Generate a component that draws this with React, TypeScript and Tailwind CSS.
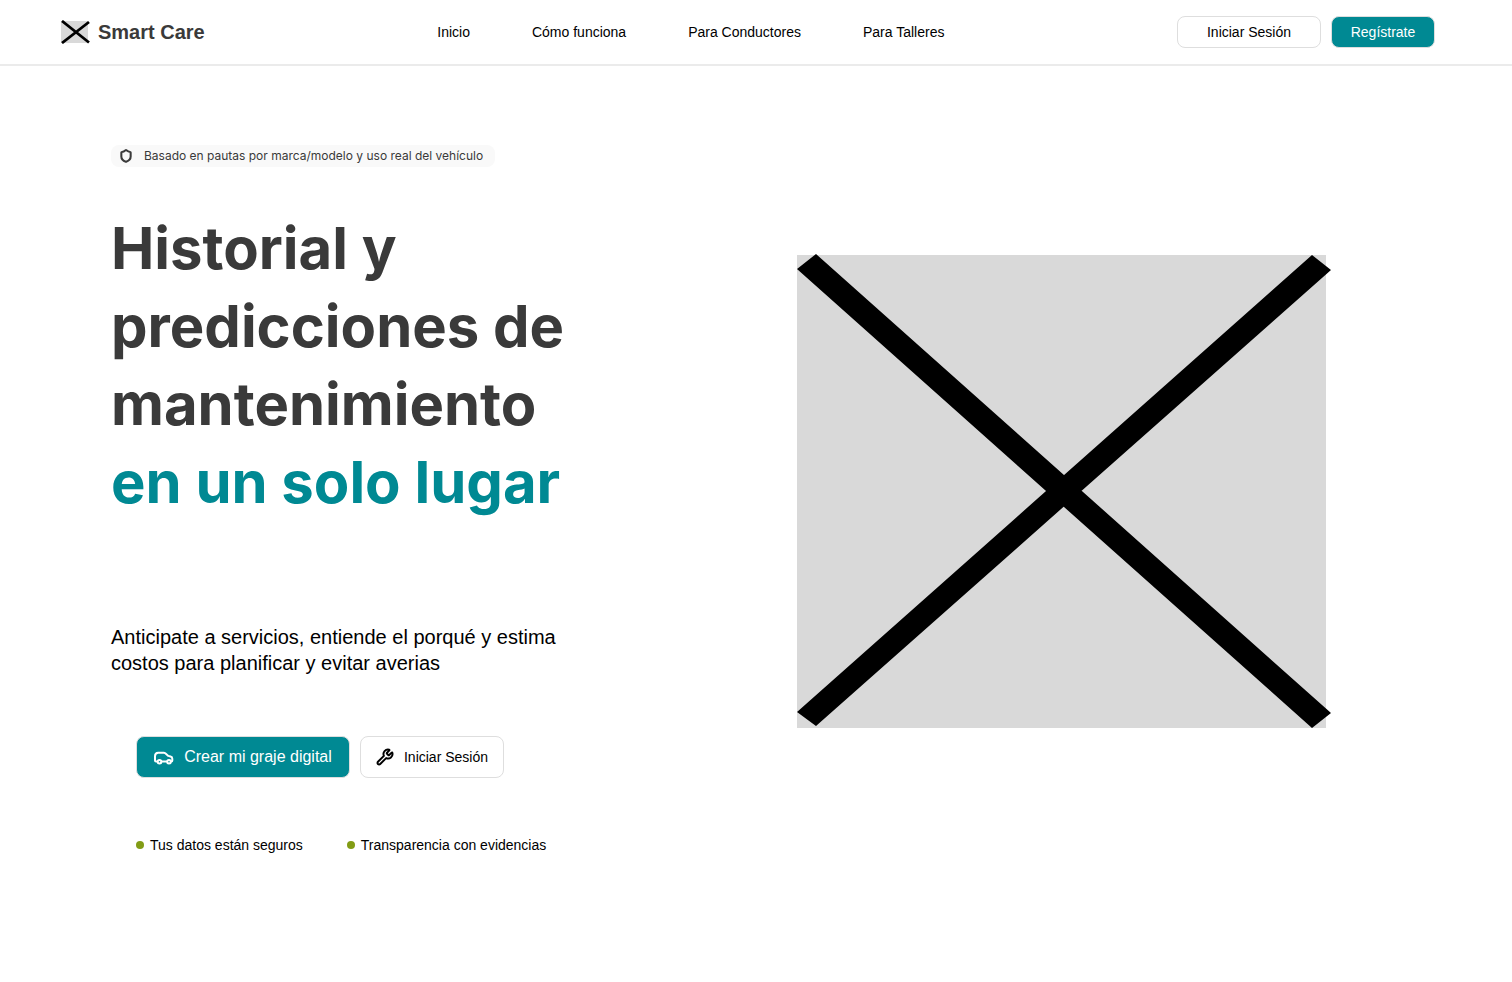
import { Wrench, Shield } from 'lucide-react';

const links = ['Inicio', 'Cómo funciona', 'Para Conductores', 'Para Talleres'];

function CarIcon() {
  return (
    <svg width="20" height="16" viewBox="0 0 20 16" fill="none" stroke="currentColor" strokeWidth="2" strokeLinejoin="round" strokeLinecap="round" aria-hidden="true">
      <path d="M3 12.600H2a1 1 0 0 1-1-1V7.300c0-2.400 1.100-3.600 3.200-3.600h5.500c.6 0 1.100.2 1.600.6l3 2.600 2.200.6c1.200.3 1.800 1.100 1.800 2.200v1.900a1 1 0 0 1-1 1h-.300M8 12.600h4.500" />
      <circle cx="5.500" cy="12.700" r="1.800" />
      <circle cx="15" cy="12.700" r="1.800" />
    </svg>
  );
}

export default function App() {
  return (
    <div className="min-h-screen bg-white font-['Liberation_Sans',Arial,sans-serif] text-black">
      <header className="flex h-[66px] items-center justify-between border-b-2 border-[#ebebeb] pl-[61px] pr-[77px]">
        <a href="#" className="flex items-center gap-2 text-xl font-bold text-[#3a3a3a]">
          <svg width="29" height="24" viewBox="0 0 29 24" aria-hidden="true">
            <path d="M0 1h27v22H0z" fill="#d9d9d9" />
            <path d="M1 1l27 21.500M1 23L28 2" stroke="#000" strokeWidth="2.800" />
          </svg>
          Smart Care
        </a>
        <nav className="flex gap-[62px] text-sm">
          {links.map((l) => (
            <a key={l} href="#">{l}</a>
          ))}
        </nav>
        <div className="flex gap-2.5 text-sm">
          <button className="h-8 w-36 rounded-lg border border-[#dedede]">Iniciar Sesión</button>
          <button className="h-8 w-[104px] rounded-lg border border-[#dedede] bg-[#008993] text-white">Regístrate</button>
        </div>
      </header>
      <main className="grid grid-cols-[1fr_715px] pl-[111px]">
        <section className="flex flex-col items-start pt-[79px]">
          <p className="flex h-[22px] items-center gap-[11px] rounded-lg bg-[#f9f9f9] pl-2 pr-3 font-['Inter',sans-serif] text-xs text-[#3a3a3a]">
            <Shield size={14} strokeWidth={3.5} aria-hidden="true" />
            Basado en pautas por marca/modelo y uso real del vehículo
          </p>
          <h1 className="mt-[42px] font-['Inter',sans-serif] text-[58px] font-bold leading-[78px] text-[#3a3a3a]">
            Historial y<br />predicciones de<br />mantenimiento<br />
            <span className="text-[#008993]">en un solo lugar</span>
          </h1>
          <p className="mt-[103px] text-xl leading-[26px]">
            Anticipate a servicios, entiende el porqué y estima<br />costos para planificar y evitar averias
          </p>
          <div className="mt-[60px] flex gap-2.5 pl-[25px]">
            <button className="flex h-[42px] w-[214px] items-center justify-center gap-2.5 rounded-lg border border-[#dedede] bg-[#008993] text-base text-white">
              <CarIcon />
              Crear mi graje digital
            </button>
            <button className="flex h-[42px] w-36 items-center justify-center gap-2.5 rounded-lg border border-[#dedede] text-sm">
              <Wrench size={18} strokeWidth={2.6} aria-hidden="true" />
              Iniciar Sesión
            </button>
          </div>
          <ul className="mt-[57px] flex gap-11 pl-[25px] text-sm">
            <li className="flex items-center gap-1.5"><span className="size-2 rounded-full bg-[#829c15]" />Tus datos están seguros</li>
            <li className="flex items-center gap-1.5"><span className="size-2 rounded-full bg-[#829c15]" />Transparencia con evidencias</li>
          </ul>
        </section>
        <svg className="mt-[187px]" width="534" height="476" viewBox="0 0 534 476" aria-hidden="true">
          <path d="M0 2h529v473H0z" fill="#d9d9d9" />
          <path d="M19 1L534 460L515 475L0 16zM515 2L534 17L19 473L0 459z" fill="#000" />
        </svg>
      </main>
    </div>
  );
}
